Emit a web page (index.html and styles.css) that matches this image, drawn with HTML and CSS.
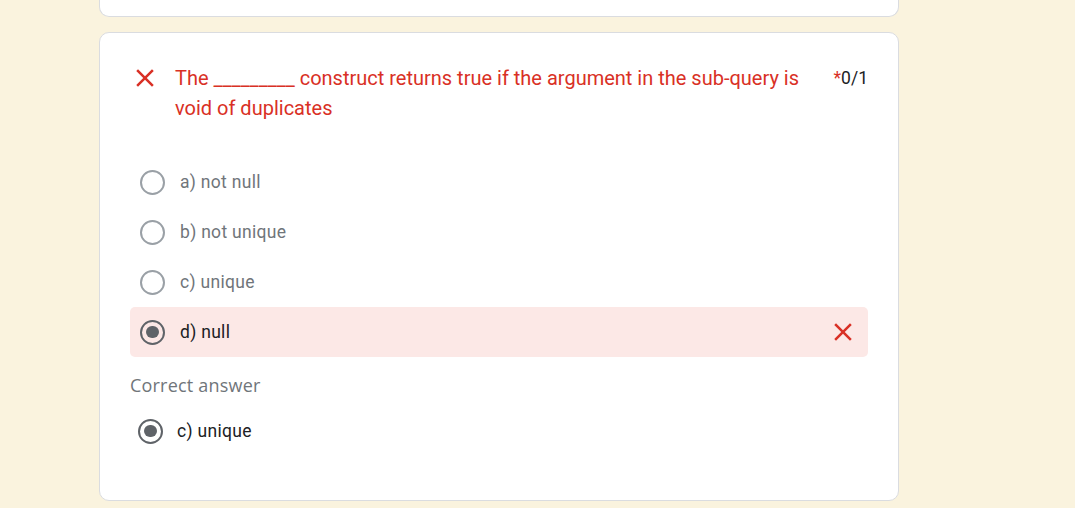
FILE: index.html
```html
<!DOCTYPE html>
<html>
<head>
<meta charset="utf-8">
<link rel="stylesheet" href="styles.css">
</head>
<body>
<div class="page">
  <div class="card card-top"></div>
  <div class="card">
    <div class="header">
      <svg class="icon" viewBox="0 0 24 24" width="30" height="30"><path fill="#d93025" d="M19 6.41L17.59 5 12 10.59 6.41 5 5 6.41 10.59 12 5 17.59 6.41 19 12 13.41 17.59 19 19 17.59 13.41 12z"/></svg>
      <div class="title">The _________ construct returns true if the argument in the sub-query is void of duplicates</div>
      <div class="points"><span class="req">*</span>0/1</div>
    </div>
    <div class="options">
      <div class="option"><span class="radio"></span><span class="label">a) not null</span></div>
      <div class="option"><span class="radio"></span><span class="label">b) not unique</span></div>
      <div class="option"><span class="radio"></span><span class="label">c) unique</span></div>
      <div class="option wrong"><span class="radio checked"></span><span class="label selected">d) null</span>
        <svg class="icon mark" viewBox="0 0 24 24" width="30" height="30"><path fill="#d93025" d="M19 6.41L17.59 5 12 10.59 6.41 5 5 6.41 10.59 12 5 17.59 6.41 19 12 13.41 17.59 19 19 17.59 13.41 12z"/></svg>
      </div>
    </div>
    <div class="correct-label">Correct answer</div>
    <div class="option correct"><span class="radio checked"></span><span class="label selected">c) unique</span></div>
  </div>
</div>
</body>
</html>
```
FILE: styles.css
```css
html, body {
  margin: 0;
  padding: 0;
  background: #faf3de;
  height: 100%;
  overflow: hidden;
}
.page {
  display: flex;
  flex-direction: column;
  align-items: flex-start;
  padding-left: 99px;
  gap: 15px;
  font-family: Roboto, "Liberation Sans", sans-serif;
}
.card {
  box-sizing: border-box;
  width: 800px;
  background: #fff;
  border: 1px solid #dadce0;
  border-radius: 10px;
  padding: 30px 30px 44px;
}
.card-top {
  height: 17px;
  padding: 0;
  border-top: none;
  border-radius: 0 0 10px 10px;
}
.header {
  display: flex;
  align-items: flex-start;
}
.icon {
  flex: none;
  display: block;
}
.header .icon {
  margin-right: 15px;
}
.title {
  flex: 1;
  color: #d93025;
  font-size: 20px;
  line-height: 30px;
}
.points {
  flex: none;
  margin-left: 24px;
  font-size: 17.5px;
  line-height: 30px;
  color: #202124;
}
.req {
  color: #d93025;
}
.options {
  margin-top: 34px;
  display: flex;
  flex-direction: column;
}
.option {
  display: flex;
  align-items: center;
  height: 50px;
  padding: 0 10px;
  border-radius: 5px;
}
.option.wrong {
  background: #fce8e6;
}
.radio {
  box-sizing: border-box;
  flex: none;
  width: 25px;
  height: 25px;
  border: 2.5px solid #9aa0a6;
  border-radius: 50%;
  display: flex;
  align-items: center;
  justify-content: center;
}
.radio.checked {
  border-color: #5f6368;
}
.radio.checked::after {
  content: "";
  width: 12.5px;
  height: 12.5px;
  border-radius: 50%;
  background: #5f6368;
}
.label {
  margin-left: 15px;
  font-size: 17.5px;
  color: #70757a;
  letter-spacing: 0.3px;
}
.label.selected {
  color: #202124;
}
.mark {
  margin-left: auto;
}
.correct-label {
  margin-top: 18px;
  font-family: "Open Sans", sans-serif;
  font-weight: 500;
  font-size: 18px;
  line-height: 20px;
  letter-spacing: 0.2px;
  color: #70757a;
}
.option.correct {
  margin-top: 11px;
  padding-left: 8px;
}
.option.correct .label {
  margin-left: 14px;
}
```
